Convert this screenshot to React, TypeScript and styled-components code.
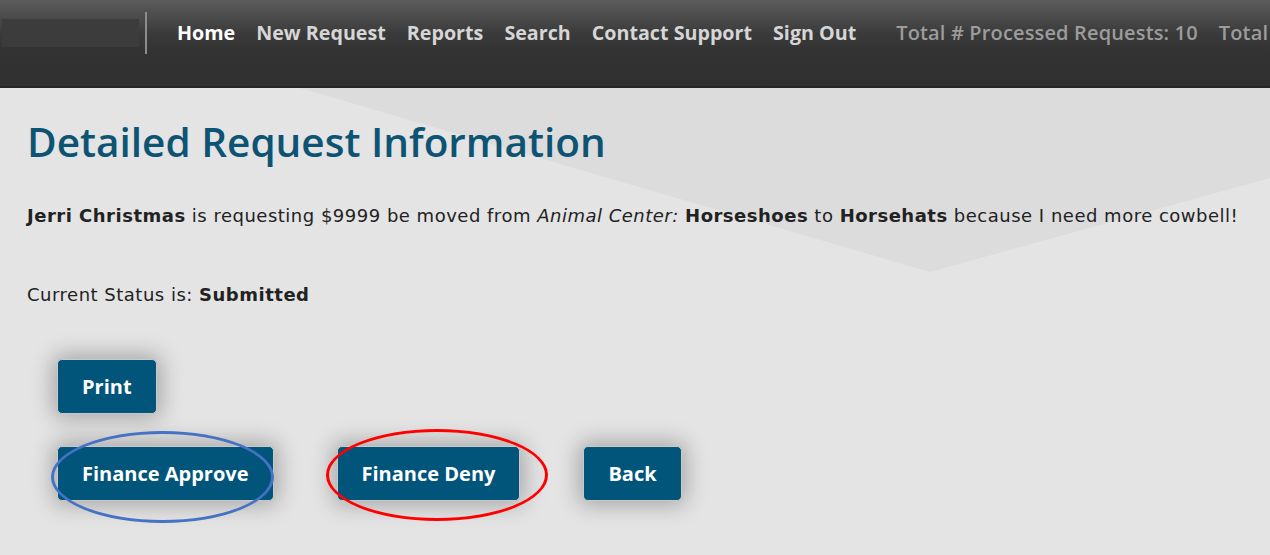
import React from "react";
import styled, { createGlobalStyle } from "styled-components";

const Global = createGlobalStyle`
  html, body { margin: 0; padding: 0; }
  body {
    width: 1270px;
    height: 555px;
    overflow: hidden;
    background: #e4e4e4;
    font-family: "Open Sans", "Liberation Sans", sans-serif;
  }
`;

const Page = styled.div`
  width: 1270px;
  height: 555px;
  display: flex;
  flex-direction: column;
`;

const Header = styled.header`
  height: 86px;
  flex: none;
  background: linear-gradient(#5c5c5c 0px, #3a3a3a 34px, #333333 50px, #303030 86px);
  border-bottom: 2px solid #262626;
  display: flex;
  align-items: flex-start;
  overflow: hidden;
`;

const HeaderRow = styled.div`
  height: 65px;
  display: flex;
  align-items: center;
  white-space: nowrap;
`;

const LogoBlock = styled.div`
  width: 137px;
  height: 28px;
  margin-left: 2px;
  background: #3c3c3c;
`;

const Divider = styled.div`
  width: 2px;
  height: 42px;
  margin-left: 6px;
  background: #8c8c8c;
`;

const Nav = styled.nav`
  display: flex;
  align-items: center;
  gap: 21px;
  margin-left: 30px;
`;

const NavLink = styled.a<{ $active?: boolean }>`
  font-family: "Open Sans", "Liberation Sans", sans-serif;
  font-weight: 700;
  font-size: 19.7px;
  color: ${(p) => (p.$active ? "#ffffff" : "#d6d6d6")};
  text-decoration: none;
  cursor: pointer;
`;

const Stats = styled.div`
  display: flex;
  gap: 21px;
  margin-left: 40px;
`;

const Stat = styled.span`
  font-family: "Open Sans", "Liberation Sans", sans-serif;
  font-weight: 600;
  font-size: 20px;
  letter-spacing: 0.15px;
  color: #9c9c9c;
`;

const Main = styled.main`
  position: relative;
  flex: 1;
  padding: 0 0 0 27px;
  overflow: hidden;
  background: #e4e4e4;
  &::before {
    content: "";
    position: absolute;
    inset: 0;
    background: #dcdcdc;
    clip-path: polygon(300px 0, 1270px 0, 1270px 90px, 930px 184px);
  }
`;

const Content = styled.div`
  position: relative;
`;

const Title = styled.h1`
  margin: 25px 0 0 0;
  font-family: "Open Sans", "Liberation Sans", sans-serif;
  font-weight: 600;
  font-size: 40.5px;
  line-height: 58px;
  color: #0d5373;
`;

const Para = styled.p`
  margin: 33px 0 0 0;
  font-family: "DejaVu Sans", "Open Sans", sans-serif;
  font-size: 18px;
  letter-spacing: 0.5px;
  line-height: 24px;
  color: #222;
  white-space: nowrap;
  b { font-weight: 700; }
  i { font-style: italic; }
`;

const Status = styled(Para)`
  margin-top: 55px;
`;

const ButtonArea = styled.div`
  margin: 52px 0 0 30px;
  display: flex;
  flex-direction: column;
  gap: 32px;
  align-items: flex-start;
`;

const ButtonRow = styled.div`
  display: flex;
  gap: 63px;
`;

const Btn = styled.button`
  position: relative;
  height: 55px;
  padding: 0 24px;
  background: #02557a;
  border: 1px solid #c9c9c9;
  border-radius: 5px;
  color: #fff;
  font-family: "Open Sans", "Liberation Sans", sans-serif;
  font-weight: 700;
  font-size: 20px;
  box-shadow: 0 0 22px 4px rgba(0, 0, 0, 0.28);
  cursor: pointer;
`;

const Ring = styled.span<{ $color: string; $left: number; $top: number; $w: number; $h: number }>`
  position: absolute;
  left: ${(p) => p.$left}px;
  top: ${(p) => p.$top}px;
  width: ${(p) => p.$w}px;
  height: ${(p) => p.$h}px;
  border: 3px solid ${(p) => p.$color};
  border-radius: 50%;
  box-sizing: border-box;
  pointer-events: none;
`;

export default function App() {
  return (
    <>
      <Global />
      <Page>
        <Header>
          <HeaderRow>
            <LogoBlock />
            <Divider />
            <Nav>
              <NavLink $active>Home</NavLink>
              <NavLink>New Request</NavLink>
              <NavLink>Reports</NavLink>
              <NavLink>Search</NavLink>
              <NavLink>Contact Support</NavLink>
              <NavLink>Sign Out</NavLink>
            </Nav>
            <Stats>
              <Stat>Total # Processed Requests: 10</Stat>
              <Stat>Total # Pending Requests: 4</Stat>
            </Stats>
          </HeaderRow>
        </Header>
        <Main>
          <Content>
            <Title>Detailed Request Information</Title>
            <Para>
              <b>Jerri Christmas</b> is requesting $9999 be moved from <i>Animal Center:</i>{" "}
              <b>Horseshoes</b> to <b>Horsehats</b> because I need more cowbell!
            </Para>
            <Status>
              Current Status is: <b>Submitted</b>
            </Status>
            <ButtonArea>
              <Btn>Print</Btn>
              <ButtonRow>
                <Btn>
                  Finance Approve
                  <Ring $color="#4472c4" $left={-7} $top={-16} $w={223} $h={92} />
                </Btn>
                <Btn>
                  Finance Deny
                  <Ring $color="#ff0000" $left={-12} $top={-18} $w={222} $h={92} />
                </Btn>
                <Btn>Back</Btn>
              </ButtonRow>
            </ButtonArea>
          </Content>
        </Main>
      </Page>
    </>
  );
}
